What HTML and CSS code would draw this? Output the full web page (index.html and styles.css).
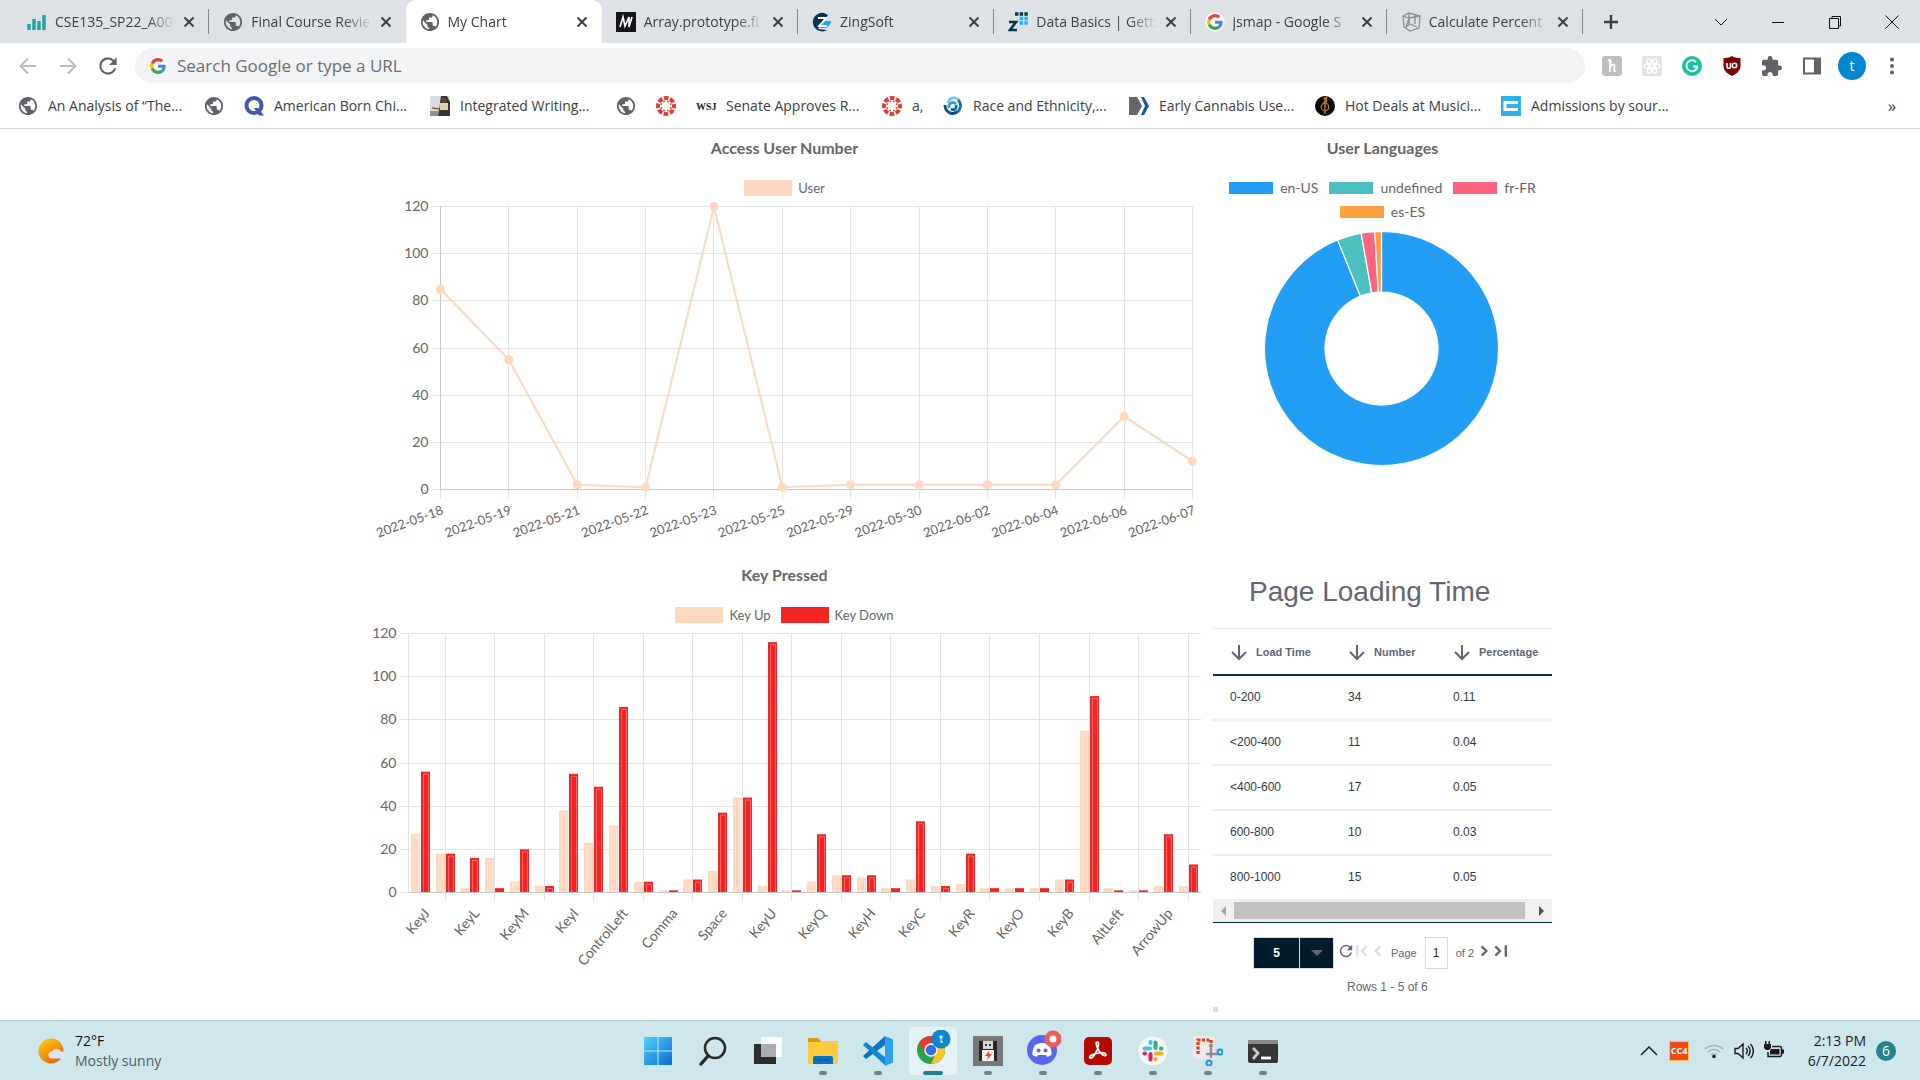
FILE: index.html
```html
<!DOCTYPE html>
<html lang="en">
<head>
<meta charset="utf-8">
<title>My Chart</title>
<link rel="stylesheet" href="styles.css">
</head>
<body>
<svg class="sprite" aria-hidden="true">
  <symbol id="globe" viewBox="1 1 22 22"><path fill="#5f6368" d="M12 2C6.480 2 2 6.480 2 12s4.480 10 10 10 10-4.480 10-10S17.520 2 12 2zm-1 17.930c-3.950-.490-7-3.850-7-7.930 0-.620.080-1.210.210-1.790L9 15v1c0 1.100.900 2 2 2v1.930zm6.900-2.540c-.260-.810-1-1.390-1.900-1.390h-1v-3c0-.550-.450-1-1-1H8v-2h2c.550 0 1-.450 1-1V7h2c1.100 0 2-.900 2-2v-.410c2.930 1.190 5 4.060 5 7.410 0 2.080-.800 3.970-2.100 5.390z"/></symbol>
  <symbol id="google" viewBox="0 0 60 60"><circle cx="30" cy="30" r="29" fill="#fff"/><g transform="translate(6 6)"><path fill="#ea4335" d="M24 9.500c3.540 0 6.710 1.220 9.210 3.600l6.850-6.850C35.900 2.380 30.470 0 24 0 14.620 0 6.510 5.380 2.560 13.220l7.980 6.190C12.430 13.720 17.740 9.500 24 9.500z"/><path fill="#4285f4" d="M46.980 24.550c0-1.570-.15-3.090-.38-4.550H24v9.020h12.940c-.58 2.960-2.260 5.480-4.780 7.180l7.730 6c4.510-4.180 7.090-10.360 7.090-17.650z"/><path fill="#fbbc05" d="M10.530 28.590c-.48-1.450-.76-2.990-.76-4.590s.27-3.140.76-4.590l-7.980-6.190C.92 16.460 0 20.120 0 24c0 3.880.92 7.540 2.560 10.780l7.970-6.190z"/><path fill="#34a853" d="M24 48c6.480 0 11.930-2.130 15.890-5.810l-7.730-6c-2.150 1.450-4.920 2.300-8.160 2.300-6.260 0-11.570-4.220-13.470-9.910l-7.980 6.190C6.510 42.620 14.620 48 24 48z"/></g></symbol>
  <symbol id="close" viewBox="0 0 12 12"><path d="M1.500 1.500l9 9M10.500 1.500l-9 9" stroke="#3c4043" stroke-width="2"/></symbol>
  <symbol id="canvas" viewBox="0 0 20 20"><circle cx="10" cy="10" r="8" fill="none" stroke="#e63c2f" stroke-width="4" stroke-dasharray="4.600 1.683" stroke-dashoffset="2.300"/><g fill="#e63c2f"><circle cx="14.600" cy="11.900" r=".9"/><circle cx="11.900" cy="14.600" r=".9"/><circle cx="8.100" cy="14.600" r=".9"/><circle cx="5.400" cy="11.900" r=".9"/><circle cx="5.400" cy="8.100" r=".9"/><circle cx="8.100" cy="5.400" r=".9"/><circle cx="11.900" cy="5.400" r=".9"/><circle cx="14.600" cy="8.100" r=".9"/></g></symbol>
  <symbol id="refresh" viewBox="0 0 24 24"><path d="M17.650 6.350A7.958 7.958 0 0 0 12 4a8 8 0 1 0 7.730 10h-2.080A6 6 0 1 1 12 6c1.660 0 3.140.690 4.220 1.780L13 11h7V4l-2.350 2.350z"/></symbol>
  <symbol id="sort" viewBox="0 0 18 18"><path d="M9 2v13.500M2 9l7 7 7-7" fill="none" stroke="#5f6675" stroke-width="2"/></symbol>
</svg>

<header class="browser">
  <div class="tabstrip">
    <div class="tabs">
      <div class="tab"><svg class="ico" viewBox="0 0 20 20"><path d="M3 12v6M8 7v11M13 9v9M18 3v15" transform="translate(-1)" stroke="#1fa3a8" stroke-width="3.400"/></svg><span class="tab-title">CSE135_SP22_A00</span><button class="close" aria-label="Close tab"><svg><use href="#close"/></svg></button></div>
      <div class="tab before-active"><svg class="ico"><use href="#globe"/></svg><span class="tab-title">Final Course Revie</span><button class="close" aria-label="Close tab"><svg><use href="#close"/></svg></button></div>
      <div class="tab active"><svg class="ico"><use href="#globe"/></svg><span class="tab-title">My Chart</span><button class="close" aria-label="Close tab"><svg><use href="#close"/></svg></button></div>
      <div class="tab"><svg class="ico" viewBox="0 0 20 20"><path fill="#15141a" d="M0 0h20v20H0z"/><path d="M4 15L7 5l2 9 4-9v10l3-10" fill="none" stroke="#fff" stroke-width="1.700"/></svg><span class="tab-title">Array.prototype.fi</span><button class="close" aria-label="Close tab"><svg><use href="#close"/></svg></button></div>
      <div class="tab"><svg class="ico" viewBox="0 0 20 20"><path fill="#04364f" d="M12 1A9.300 9.300 0 1 0 15 18l-9-1 4-5 6-9z"/><path fill="#14aef0" d="M13 9h6a9 9 0 0 1-5 7h-6z"/><path d="M6 6h8l-7 8h8" fill="none" stroke="#fff" stroke-width="1.800"/></svg><span class="tab-title">ZingSoft</span><button class="close" aria-label="Close tab"><svg><use href="#close"/></svg></button></div>
      <div class="tab"><svg class="ico" viewBox="0 0 20 20"><path d="M1 10h7l-6 8h7" fill="none" stroke="#04364f" stroke-width="2.600"/><path d="M7 2h13" stroke="#04364f" stroke-width="3.400" stroke-dasharray="3.400 1.300"/><path d="M11.700 6.500H20M11.700 11H20" stroke="#14b4f5" stroke-width="3.400" stroke-dasharray="3.400 1.300"/></svg><span class="tab-title">Data Basics | Getti</span><button class="close" aria-label="Close tab"><svg><use href="#close"/></svg></button></div>
      <div class="tab"><svg class="ico"><use href="#google"/></svg><span class="tab-title">jsmap - Google S</span><button class="close" aria-label="Close tab"><svg><use href="#close"/></svg></button></div>
      <div class="tab"><svg class="ico" viewBox="0 0 20 20"><path d="M2 4l6-3 11 3-1 12-9 3-6-4zM2 4l6 2 11-2M8 6L5 15l4-3 7 3M8 1v11M14 3v9" fill="none" stroke="#8b8d90" stroke-width="1.300"/></svg><span class="tab-title">Calculate Percent</span><button class="close" aria-label="Close tab"><svg><use href="#close"/></svg></button></div>
    </div>
    <button class="newtab" aria-label="New tab"><svg viewBox="0 0 16 16"><path d="M8 1v14M1 8h14" stroke="#3c4043" stroke-width="2.400"/></svg></button>
    <div class="winctl">
      <button aria-label="Search tabs"><svg viewBox="0 0 14 14"><path d="M1 4l6 6 6-6"/></svg></button>
      <button aria-label="Minimize"><svg viewBox="0 0 14 14"><path d="M1 7.500h12"/></svg></button>
      <button aria-label="Restore"><svg viewBox="0 0 14 14"><path d="M1.500 3.500h9v10h-9zM4 3.500v-2h8.500V11H10.500"/></svg></button>
      <button aria-label="Close"><svg viewBox="0 0 14 14"><path d="M.5.5l13 13M13.500.5l-13 13"/></svg></button>
    </div>
  </div>

  <div class="toolbar">
    <div class="nav">
      <button aria-label="Back"><svg viewBox="0 0 20 20"><path d="M18 10H3M10 2.500L2.500 10l7.500 7.500" fill="none" stroke="#babcbe" stroke-width="2"/></svg></button>
      <button aria-label="Forward"><svg viewBox="0 0 20 20"><path d="M2 10h15M10 2.500l7.500 7.500-7.500 7.500" fill="none" stroke="#babcbe" stroke-width="2"/></svg></button>
      <button aria-label="Reload"><svg class="reload" fill="#5f6368"><use href="#refresh"/></svg></button>
    </div>
    <label class="omnibox"><svg class="ico"><use href="#google"/></svg><input type="text" placeholder="Search Google or type a URL" aria-label="Address"></label>
    <div class="exts">
      <button aria-label="Honey"><svg viewBox="0 0 20 20"><rect width="20" height="20" rx="3" fill="#bfbfbf"/><path d="M8 3v13M8 12c2-5 5-4 4.500-1l-.5 3c0 2 1 1.500 2 1M6 4l4 2" fill="none" stroke="#fff" stroke-width="1.800"/></svg></button>
      <button aria-label="React tools"><svg viewBox="0 0 20 20"><rect width="20" height="20" rx="2" fill="#e3e3e3"/><g fill="none" stroke="#fff" stroke-width="1.200"><ellipse cx="10" cy="10" rx="8" ry="3"/><ellipse cx="10" cy="10" rx="8" ry="3" transform="rotate(60 10 10)"/><ellipse cx="10" cy="10" rx="8" ry="3" transform="rotate(120 10 10)"/><circle cx="10" cy="10" r="2"/></g></svg></button>
      <button aria-label="Grammarly"><svg viewBox="0 0 20 20"><circle cx="10" cy="10" r="10" fill="#15c39a"/><path d="M14 6a5.500 5.500 0 1 0 1 6l.3-1.500H11" fill="none" stroke="#fff" stroke-width="1.900"/></svg></button>
      <button aria-label="uBlock"><svg viewBox="0 0 20 20"><path fill="#7e0407" d="M10 0c3 2 6 2 8.500 2v8c0 5-4.500 8-8.500 10C6 18 1.500 15 1.500 10V2C4 2 7 2 10 0z"/><path d="M5 7v3.500a1.500 1.500 0 0 0 3.500 0V7" fill="none" stroke="#fff" stroke-width="1.600"/><circle cx="12.500" cy="9.500" r="2.200" fill="none" stroke="#fff" stroke-width="1.600"/></svg></button>
      <button aria-label="Extensions"><svg viewBox="2 1 21 21"><path fill="#5f6368" d="M20.500 11H19V7c0-1.100-.9-2-2-2h-4V3.500a2.500 2.500 0 0 0-5 0V5H4c-1.100 0-2 .9-2 2v3.800h1.500c1.490 0 2.700 1.210 2.700 2.700s-1.210 2.700-2.700 2.700H2V20c0 1.100.9 2 2 2h3.800v-1.500c0-1.490 1.210-2.700 2.700-2.700s2.700 1.210 2.700 2.700V22H17c1.100 0 2-.9 2-2v-4h1.500a2.500 2.500 0 0 0 0-5z"/></svg></button>
      <button aria-label="Side panel"><svg viewBox="0 0 20 20"><path d="M2 2.500h16v15H2z" fill="none" stroke="#5f6368" stroke-width="2"/><path d="M12 2h6v16h-6z" fill="#5f6368"/></svg></button>
      <button class="avatar" aria-label="Profile">t</button>
      <button aria-label="Menu"><svg viewBox="0 0 20 20" fill="#5f6368"><circle cx="10" cy="3.500" r="2"/><circle cx="10" cy="10" r="2"/><circle cx="10" cy="16.500" r="2"/></svg></button>
    </div>
  </div>

  <nav class="bookmarks">
    <a href="#"><svg class="ico"><use href="#globe"/></svg><span>An Analysis of “The...</span></a>
    <a href="#" aria-label="Bookmark"><svg class="ico"><use href="#globe"/></svg></a>
    <a href="#"><svg class="ico" viewBox="0 0 20 20"><circle cx="10" cy="9.500" r="7.500" fill="none" stroke="#4257b2" stroke-width="4"/><path d="M10 12h4l6 7.500h-5z" fill="#4257b2"/></svg><span>American Born Chi...</span></a>
    <a href="#"><svg class="ico" viewBox="0 0 20 20"><path fill="#d9dde2" d="M0 0h20v20H0z"/><path fill="#3a3438" d="M11 0h6l3 6v14H8z"/><path fill="#e2d3a3" d="M9 7h9v7h-8z"/><circle cx="14" cy="4" r="2.500" fill="#6b4230"/><path d="M10 13L2 12" stroke="#8d5c42" stroke-width="1.500"/><path fill="#8d8e90" d="M0 15h8v5H0z"/></svg><span>Integrated Writing...</span></a>
    <a href="#" aria-label="Bookmark"><svg class="ico"><use href="#globe"/></svg></a>
    <a href="#" aria-label="Canvas"><svg class="ico"><use href="#canvas"/></svg></a>
    <a href="#"><b class="ico wsj">WSJ</b><span>Senate Approves R...</span></a>
    <a href="#"><svg class="ico"><use href="#canvas"/></svg><span class="short">a,</span></a>
    <a href="#"><svg class="ico" viewBox="0 0 20 20"><g fill="none" stroke-width="2.800"><path d="M5 7c1-6 9-7 12-1" stroke="#7cc8ea"/><path d="M15 4c5 5 2 12-4 13" stroke="#1c6da4"/><path d="M14 16C8 20 2 15 2 9" stroke="#0d4f86"/><path d="M6 12c-1-5 4-7 7-4" stroke="#2f9fd0"/><path d="M8 13c4 2 6-1 5-4" stroke="#12619c"/></g></svg><span>Race and Ethnicity,...</span></a>
    <a href="#"><svg class="ico" viewBox="0 0 20 20"><path fill="#626569" d="M0 1h8l5 9-5 9H0z"/><path fill="#14589c" d="M12 1h3l5 9-5 9h-3l4-9z"/></svg><span>Early Cannabis Use...</span></a>
    <a href="#"><svg class="ico" viewBox="0 0 20 20"><circle cx="10" cy="10" r="10" fill="#0c0903"/><path d="M10 1v17M10 6v9M8.500 2.500l3-1v4l-3 1" fill="none" stroke="#b58220" stroke-width="1.300"/><circle cx="10" cy="11" r="3.800" fill="none" stroke="#b58220" stroke-width="1.200"/></svg><span>Hot Deals at Musici...</span></a>
    <a href="#"><svg class="ico" viewBox="0 0 20 20"><path fill="#2fb0e6" d="M0 0h20v20H0z"/><path d="M17 6.500H4v7h13" fill="none" stroke="#fff" stroke-width="3"/></svg><span>Admissions by sour...</span></a>
    <button class="more" aria-label="More bookmarks">»</button>
  </nav>
</header>

<main class="dashboard">
  <section class="chart">
    <h2>Access User Number</h2>
    <ul class="legend"><li><i class="swatch peach"></i>User</li></ul>
    <svg id="users" viewBox="0 0 833 358" role="img" aria-label="Users per day"></svg>
  </section>
  <section class="chart languages">
    <h2>User Languages</h2>
    <ul class="legend"><li><i class="swatch blue"></i>en-US</li><li><i class="swatch teal"></i>undefined</li><li><i class="swatch pink"></i>fr-FR</li><li><i class="swatch orange"></i>es-ES</li></ul>
    <svg id="languages" viewBox="0 0 339 300" role="img" aria-label="User languages"></svg>
  </section>
  <section class="chart">
    <h2>Key Pressed</h2>
    <ul class="legend"><li><i class="swatch peach"></i>Key Up</li><li><i class="swatch red"></i>Key Down</li></ul>
    <svg id="keys" viewBox="0 0 833 380" role="img" aria-label="Keys pressed"></svg>
  </section>
  <section class="loading">
    <h1>Page Loading Time</h1>
    <table>
      <thead><tr>
        <th><div><svg><use href="#sort"/></svg>Load Time</div></th>
        <th><div><svg><use href="#sort"/></svg>Number</div></th>
        <th><div><svg><use href="#sort"/></svg>Percentage</div></th>
      </tr></thead>
      <tbody>
        <tr><td>0-200</td><td>34</td><td>0.11</td></tr>
        <tr><td>&lt;200-400</td><td>11</td><td>0.04</td></tr>
        <tr><td>&lt;400-600</td><td>17</td><td>0.05</td></tr>
        <tr><td>600-800</td><td>10</td><td>0.03</td></tr>
        <tr><td>800-1000</td><td>15</td><td>0.05</td></tr>
      </tbody>
    </table>
    <div class="hscroll"><svg viewBox="0 0 5 10"><path d="M5 0v10L0 5z" fill="#a3a3a3"/></svg><div class="thumb"></div><svg viewBox="0 0 5 10"><path d="M0 0v10l5-5z" fill="#505050"/></svg></div>
    <div class="pager">
      <div class="pagesize"><select aria-label="Rows per page"><option>5</option></select><span><svg viewBox="0 0 12 6"><path d="M0 0h12L6 6z" fill="#5f6675"/></svg></span></div>
      <button aria-label="Reload"><svg class="wide" viewBox="3 3 18 18" fill="#5f6675"><use href="#refresh" width="24" height="24"/></svg></button>
      <button class="off" aria-label="First page"><svg viewBox="0 0 12 12"><path d="M2 1v10M10 2L6 6l4 4"/></svg></button>
      <button class="off" aria-label="Previous page"><svg viewBox="0 0 12 12"><path d="M8 2L4 6l4 4"/></svg></button>
      <label for="page">Page</label>
      <input id="page" type="text" value="1">
      <span class="total">of 2</span>
      <button aria-label="Next page"><svg viewBox="0 0 12 12"><path d="M4 2l4 4-4 4"/></svg></button>
      <button aria-label="Last page"><svg viewBox="0 0 12 12"><path d="M2 2l4 4-4 4M11 1v10"/></svg></button>
    </div>
    <p class="rows">Rows 1 - 5 of 6</p>
    <div class="grip"></div>
  </section>
</main>

<footer class="taskbar">
  <button class="weather">
    <svg viewBox="0 0 28 28"><defs><linearGradient id="sun" x1="0" y1="0" x2=".7" y2="1"><stop offset="0" stop-color="#fdd10c"/><stop offset="1" stop-color="#e8660c"/></linearGradient></defs><circle cx="13" cy="14" r="12.500" fill="url(#sun)"/><path d="M14 21.500a3.500 3.500 0 0 1 0-7 5 5 0 0 1 9 0 3.500 3.500 0 0 1 1 7z" fill="#d9e5f6"/></svg>
    <span><b>72°F</b><br>Mostly sunny</span>
  </button>
  <div class="apps">
    <button aria-label="Start"><svg viewBox="0 0 30 30"><defs><linearGradient id="win" x1="0" y1="0" x2="1" y2="1"><stop offset="0" stop-color="#4fd0fb"/><stop offset="1" stop-color="#0a6dd0"/></linearGradient></defs><path fill="url(#win)" d="M1 1h13.500v13.500H1zM15.500 1H29v13.500H15.500zM1 15.500h13.500V29H1zM15.500 15.500H29V29H15.500z"/></svg></button>
    <button aria-label="Search"><svg viewBox="0 0 30 30"><circle cx="17" cy="12" r="10" fill="none" stroke="#2b2b2b" stroke-width="2.600"/><path d="M10 20l-7 8" stroke="#2b2b2b" stroke-width="3.400" stroke-linecap="round"/></svg></button>
    <button aria-label="Task view"><svg viewBox="0 0 30 30"><path fill="#2c2c2c" d="M1 8h22v20H1z"/><path fill="#fff" opacity=".85" d="M23 1h6v20H8v-1h15z"/><path fill="#fff" d="M8 1h21v7H8z" opacity=".85"/><path fill="#a9adae" d="M8 8h15v13H8z"/></svg></button>
    <button class="run" aria-label="File Explorer"><svg viewBox="0 0 30 30"><path fill="#dd9a07" d="M0 2h10l3 3v6H0z"/><path fill="#fccb3e" d="M0 6h12l2-1h16v23H0z"/><path fill="#0c70cb" d="M5 28v-6a2 2 0 0 1 2-2h16a2 2 0 0 1 2 2v6z"/><path d="M9 24h12" stroke="#0b4c8c"/></svg></button>
    <button class="run" aria-label="VS Code"><svg viewBox="0 0 30 30"><path fill="#0b74bd" d="M22 0v9L3 23l-3-3z"/><path fill="#1088d4" d="M0 9l3-3 20 16v8z"/><path fill="#2ba3ef" d="M22 0l8 3.500v23L22 30z"/></svg></button>
    <button class="run current" aria-label="Chrome"><svg viewBox="0 0 36 36"><circle cx="16" cy="20" r="14" fill="#2ba24c"/><path fill="#fcc31e" d="M16 20V13h12.100A14 14 0 0 1 16 34l5-11z"/><path fill="#e33b2e" d="M3.900 13L10 23l6-10h12.100A14 14 0 0 0 3.900 13z"/><circle cx="16" cy="20" r="6.700" fill="#fff"/><circle cx="16" cy="20" r="5.300" fill="#2f6fe4"/><circle cx="26" cy="9" r="9.500" fill="#0e87cc"/><path d="M26 5v7h2M24 7h4" fill="none" stroke="#d6eef9" stroke-width="1.300"/></svg></button>
    <button class="run" aria-label="Flash tool"><svg viewBox="0 0 30 30"><path fill="#787878" d="M0 0h30v30H0z"/><path fill="#282525" d="M6 5h18v20H6z"/><path fill="#d8d8d8" d="M10 5h10v8H10z"/><path fill="#333" d="M12 8h2v2h-2zM16 8h2v2h-2z"/><path fill="#f5f5f5" d="M9 14h12v11H9z"/><path fill="#e8452b" d="M16 15l-4 5h3l-1 4 5-6h-3z"/></svg></button>
    <button class="run" aria-label="Discord"><svg viewBox="0 0 36 36"><circle cx="17" cy="20" r="15" fill="#5865f2"/><path fill="#fff" d="M10 15l5-2h4l5 2c2 3 3 7 2.500 10L22 27l-1-2h-8l-1 2-4.500-2C7 22 8 18 10 15z"/><circle cx="13.500" cy="20.500" r="2" fill="#5865f2"/><circle cx="20.500" cy="20.500" r="2" fill="#5865f2"/><circle cx="28" cy="9" r="6" fill="#fff" stroke="#f05b5b" stroke-width="5"/></svg></button>
    <button class="run" aria-label="Acrobat"><svg viewBox="0 0 30 30"><rect x="1" y="1" width="28" height="28" rx="5" fill="#b30b00"/><path d="M14 6c3 0 1 5 0 8-2 5-5 9-7 8-2-2 4-4 8-5 5-1 8 0 8 2-1 2-5-1-7-4-2-4-4-9-2-9z" fill="none" stroke="#fff" stroke-width="1.700"/></svg></button>
    <button class="run" aria-label="Slack"><svg viewBox="0 0 30 30"><circle cx="15" cy="15" r="14.500" fill="#f6f5f6"/><g stroke-width="4" stroke-linecap="round"><path d="M6.500 12.500H12M12.500 6v1" stroke="#36c5f0"/><path d="M17.500 6.500V12M23 12.500h.5" stroke="#2eb67d"/><path d="M23.500 17.500H18M17.500 23.500V23" stroke="#ecb22e"/><path d="M12.500 23.500V18M7 17.500h-.5" stroke="#e01e5a"/></g></svg></button>
    <button class="run" aria-label="Snipping Tool"><svg viewBox="0 0 30 30"><rect width="22" height="23" rx="2" fill="#eee8e6"/><path d="M5 18V4h13v7" fill="none" stroke="#d4421b" stroke-width="3.200" stroke-dasharray="3 1.500"/><path d="M18 8v14M13 18h12" stroke="#8b8f94" stroke-width="2.400"/><circle cx="27" cy="16" r="2.500" fill="none" stroke="#1c93dc" stroke-width="2"/><circle cx="16" cy="27" r="2.500" fill="none" stroke="#1c93dc" stroke-width="2"/></svg></button>
    <button class="run" aria-label="Terminal"><svg viewBox="0 0 30 30"><rect y="4" width="30" height="23" rx="2" fill="#363636"/><path d="M0 8V6a2 2 0 0 1 2-2h26a2 2 0 0 1 2 2v2z" fill="#8a8a8a"/><path d="M5 12l5 5-5 6" fill="none" stroke="#c9c9c9" stroke-width="2.800"/><path d="M13 22h10" stroke="#fff" stroke-width="2.800"/></svg></button>
  </div>
  <div class="tray">
    <button aria-label="Hidden icons"><svg viewBox="0 0 20 20"><path d="M2 14l8-8 8 8" fill="none" stroke="#1b1b1b" stroke-width="1.500"/></svg></button>
    <button class="cc" aria-label="Converter">CC4</button>
    <button aria-label="Network"><svg viewBox="0 0 20 20"><g fill="none" stroke="#a3b6bc" stroke-width="1.500"><path d="M1 8a13 13 0 0 1 18 0M4 11a8.500 8.500 0 0 1 12 0M7 14a4.500 4.500 0 0 1 6 0"/></g><circle cx="10" cy="15.500" r="1.800" fill="#1b1b1b"/></svg></button>
    <button aria-label="Volume"><svg viewBox="0 0 20 20" fill="none" stroke="#1b1b1b" stroke-width="1.400"><path d="M1 7.500h3L9 3v14l-5-4.500H1zM12 7a4 4 0 0 1 0 6M14 5a7 7 0 0 1 0 10M16.500 3a10 10 0 0 1 0 14"/></svg></button>
    <button aria-label="Battery"><svg viewBox="0 0 20 20"><path d="M8 5.500h8a1.500 1.500 0 0 1 1.500 1.500v7a1.500 1.500 0 0 1-1.500 1.500H4V11" fill="none" stroke="#1b1b1b" stroke-width="1.500"/><path d="M7 8h8.500v5.500H6V10zM17.500 8.500H20v4h-2.500zM0 3h7v4L5 9H2L0 7zM1 0h1.500v3H1zM4.500 0H6v3H4.500z" fill="#1b1b1b"/></svg></button>
    <button class="clock">2:13 PM<br>6/7/2022</button>
    <span class="count">6</span>
  </div>
</footer>
<script src="charts.js"></script>
</body>
</html>
```
FILE: styles.css
```css
* { box-sizing: border-box; }
body {
  margin: 0;
  min-height: 100vh;
  display: flex;
  flex-direction: column;
  background: #fff;
  font-family: "Open Sans", "Noto Sans", sans-serif;
  font-size: 14px;
  color: #3c4043;
}
button { border: 0; padding: 0; background: none; font: inherit; color: inherit; }
button svg { display: block; }
.sprite { position: absolute; width: 0; height: 0; }
.ico { flex: none; width: 20px; height: 20px; }

/* tab strip */
.tabstrip { display: flex; align-items: center; height: 43px; background: #dee1e6; padding-left: 13px; }
.tabs { display: flex; flex: 0 1 1570px; align-self: stretch; min-width: 0; }
.tab {
  display: flex;
  align-items: center;
  flex: 1 1 0;
  min-width: 0;
  padding: 0 14px;
  background: linear-gradient(#85898e, #85898e) right center / 1px 25px no-repeat;
}
.tab-title {
  flex: 1;
  min-width: 0;
  margin-left: 8px;
  line-height: 20px;
  white-space: nowrap;
  overflow: hidden;
  mask-image: linear-gradient(to right, #000 calc(100% - 28px), transparent);
}
.close { flex: none; margin-left: 8px; }
.close svg { width: 12px; height: 12px; }
.tab.before-active { background: none; }
.tab.active { background: #fff; border-radius: 10px 10px 0 0; }
.newtab { margin-left: 20px; }
.newtab svg { width: 16px; height: 16px; }
.winctl { display: flex; margin-left: auto; }
.winctl button { width: 57px; height: 36px; display: grid; place-items: center; }
.winctl svg { width: 14px; height: 14px; fill: none; stroke: #111; stroke-width: 1; }

/* toolbar */
.toolbar { display: flex; align-items: center; height: 45px; padding: 0 8px; }
.nav { display: flex; width: 127px; }
.nav button { width: 40px; height: 28px; display: grid; place-items: center; }
.nav svg { width: 20px; height: 20px; }
.nav .reload { width: 26px; height: 26px; }
.omnibox { flex: 1; display: flex; align-items: center; height: 35px; padding-left: 13px; background: #f1f3f4; border-radius: 18px; }
.omnibox input { flex: 1; margin-left: 9px; padding: 0; border: 0; outline: 0; background: none; font: 17px "Open Sans", sans-serif; }
.omnibox input::placeholder { color: #6b6f73; opacity: 1; }
.exts { display: flex; align-items: center; padding-left: 7px; }
.exts button { width: 40px; display: grid; place-items: center; }
.exts svg { width: 20px; height: 20px; }
.exts .avatar { width: 28px; height: 28px; margin: 0 6px; border-radius: 50%; background: #0288d1; color: #fff; }

/* bookmarks */
.bookmarks { display: flex; align-items: center; gap: 20px; height: 41px; padding: 0 18px 4px; border-bottom: 1px solid #dadce0; }
.bookmarks a { display: flex; align-items: center; gap: 10px; color: inherit; text-decoration: none; }
.bookmarks span { width: 136px; line-height: 20px; white-space: nowrap; }
.bookmarks .short { width: 11px; }
.wsj { display: grid; place-items: center; font: bold 10px "Liberation Serif", serif; color: #222; }
.more { margin-left: auto; width: 20px; font-size: 17px; line-height: 20px; }

/* dashboard */
.dashboard {
  flex: 1;
  display: grid;
  grid-template-columns: minmax(0, 833fr) minmax(0, 339fr);
  grid-template-rows: auto 1fr;
  column-gap: 12px;
  width: 100%;
  max-width: 1184px;
  margin: 0 auto;
}
.chart { padding-top: 9px; font: 13px Lato, sans-serif; color: #666; }
.chart h2 { margin: 0; font-size: 16px; line-height: 20px; text-align: center; }
.chart svg { display: block; width: 100%; height: auto; }
.chart text { font: 14px Lato, sans-serif; fill: #666; }
.chart .date { font-size: 13px; }
.legend { display: flex; flex-wrap: wrap; justify-content: center; gap: 4px 10px; margin: 20px 0 0; padding: 0; list-style: none; line-height: 20px; }
.legend li { display: flex; align-items: center; gap: 6px; }
.swatch { width: 48px; height: 16px; }
.languages .legend { column-gap: 11px; font-size: 14px; }
.languages .legend li { gap: 7px; }
.languages .swatch { width: 44px; height: 12px; }
.peach { background: #ffd8c0; }
.red { background: #f42424; }
.blue { background: #229ff5; }
.teal { background: #4bc0c0; }
.pink { background: #ff6384; }
.orange { background: #ff9f40; }
.grid { stroke: #e4e4e4; fill: none; }
.axis { stroke: #c9c9c9; fill: none; }
.series { stroke: #ffd8c0; stroke-width: 2; fill: none; }
.up { fill: #ffd8c0; }
.down { fill: #f42424; }
.inset { fill: none; stroke: #fff; stroke-opacity: .3; }

/* loading table */
.loading { font-family: "Liberation Sans", Arial, sans-serif; font-size: 12px; color: #5f6675; }
.loading h1 { margin: 0; padding: 20px 0 20px 36px; font-size: 28px; font-weight: 400; line-height: 32px; white-space: nowrap; }
.loading table { width: 100%; table-layout: fixed; border-collapse: separate; border-spacing: 0; border-top: 1px solid #ececec; }
.loading th:first-child { width: 118px; }
.loading th:nth-child(2) { width: 105px; }
.loading th { height: 47px; padding: 0 0 0 17px; border-bottom: 2px solid #04304f; font-size: 11px; white-space: nowrap; }
.loading th div { display: flex; align-items: center; gap: 8px; }
.loading th svg { width: 18px; height: 18px; }
.loading td { height: 45px; padding: 0 0 2px 17px; border-bottom: 2px solid #eee; color: #333a45; }
.loading tbody tr:last-child td { height: 43px; border: 0; }
.hscroll { display: flex; align-items: center; height: 24px; padding: 0 8px; background: #f0f0f0; border-bottom: 1px solid #04304f; }
.hscroll svg { width: 5px; height: 10px; }
.thumb { flex: 1; height: 17px; margin: 0 14px 0 8px; background: #c1c1c1; }
.pager { display: flex; align-items: center; margin: 14px 0 0 40px; font-size: 11px; }
.pagesize { display: flex; width: 81px; height: 32px; margin-right: 4px; border: 1px solid #d9dee2; background: #001b2b; }
.pagesize select { width: 46px; border: 0; border-right: 1px solid #d9dee2; appearance: none; background: none; color: #fff; font: bold 12px "Liberation Sans", Arial, sans-serif; text-align: center; text-align-last: center; }
.pagesize span { flex: 1; display: grid; place-items: center; }
.pagesize svg { width: 12px; height: 6px; }
.pager button { padding: 0 1px; }
.pager button svg { width: 14px; height: 14px; margin-bottom: 4px; fill: none; stroke: #5f6675; stroke-width: 2; }
.pager button .wide { fill: #5f6675; stroke: none; }
.pager .off svg { stroke: #dcdfe3; }
.pager label { margin-left: 5px; }
.pager input { width: 23px; height: 32px; margin: 0 8px; padding: 0; border: 1px solid #d9d9d9; font: 12px "Liberation Sans", Arial, sans-serif; text-align: center; color: #222; }
.total { margin-right: 2px; }
.rows { margin: 11px 0 13px 134px; line-height: 14px; }
.grip { width: 5px; height: 5px; background: #ddd; }

/* taskbar */
.taskbar { display: grid; grid-template-columns: 1fr auto 1fr; align-items: center; height: 60px; padding: 0 24px; background: #cee7ec; border-top: 1px solid #bad0d8; color: #1b1b1b; }
.weather { display: flex; align-items: center; gap: 9px; padding-left: 14px; text-align: left; line-height: 20px; color: #4f5e62; }
.weather svg { width: 28px; height: 28px; }
.weather b { font-weight: 400; color: #111; }
.apps { display: flex; gap: 7px; }
.apps button { position: relative; width: 48px; height: 48px; display: grid; place-items: center; border-radius: 5px; }
.apps svg { width: 30px; height: 30px; }
.apps svg[viewBox="0 0 36 36"] { width: 36px; height: 36px; margin-bottom: 6px; }
.apps .run::after { content: ""; position: absolute; left: 20px; bottom: 0; width: 8px; height: 4px; border-radius: 2px; background: #6e8288; }
.apps .current { background: #e4f2f6; }
.apps .current::after { left: 14px; width: 20px; background: #25808f; }
.tray { display: flex; align-items: center; justify-content: flex-end; gap: 10px; }
.tray svg { width: 20px; height: 20px; }
.tray .cc { width: 20px; height: 20px; margin-right: 5px; background: #ee4b1a; border: 1px solid #f7c34a; color: #fff; font-size: 9px; font-weight: 700; line-height: 16px; }
.tray .clock { width: 72px; text-align: right; line-height: 20px; }
.count { width: 20px; height: 20px; border-radius: 50%; background: #25808f; color: #fff; font-size: 14px; line-height: 20px; text-align: center; }
```
FILE: charts.js
```js
const NS = "http://www.w3.org/2000/svg";

function add(svg, name, attrs, text) {
  const el = document.createElementNS(NS, name);
  for (const key in attrs) el.setAttribute(key, attrs[key]);
  if (text !== undefined) el.textContent = text;
  svg.appendChild(el);
}

function yAxis(svg, left, right, top, bottom) {
  for (let v = 0; v <= 120; v += 20) {
    const y = Math.round(bottom - (bottom - top) * v / 120 - 0.5) + 0.5;
    add(svg, "path", { class: "grid", d: `M${left - 9} ${y}H${right}` });
    add(svg, "text", { x: left - 12, y: y + 4.5, "text-anchor": "end" }, v);
  }
}

function tiltedLabel(svg, x, y, angle, text, cls) {
  add(svg, "text", { class: cls, x, y, dy: "0.35em", "text-anchor": "end", transform: `rotate(${-angle} ${x} ${y})` }, text);
}

function drawUsers() {
  const svg = document.getElementById("users");
  const days = ["05-18", "05-19", "05-21", "05-22", "05-23", "05-25", "05-29", "05-30", "06-02", "06-04", "06-06", "06-07"];
  const counts = [85, 55, 2, 1, 120, 1, 2, 2, 2, 2, 31, 12];
  const left = 72.5, right = 824.5, top = 8.5, bottom = 291.5;
  const px = i => left + i * (right - left) / 11;
  const py = v => bottom - v * (bottom - top) / 120;
  yAxis(svg, left, right, top, bottom);
  days.forEach((day, i) => {
    const x = Math.round(px(i) - 0.5) + 0.5;
    add(svg, "path", { class: "grid", d: `M${x} ${top}V${bottom + 9}` });
    tiltedLabel(svg, px(i) + 2, bottom + 20, 20, "2022-" + day, "date");
  });
  add(svg, "path", { class: "axis", d: `M${left} ${top}V${bottom}H${right}` });
  add(svg, "polyline", { class: "series", points: counts.map((v, i) => px(i) + "," + py(v)).join(" ") });
  counts.forEach((v, i) => add(svg, "circle", { class: "up", cx: px(i), cy: py(v), r: 4.5 }));
}

function drawLanguages() {
  const svg = document.getElementById("languages");
  const cx = 168.5, cy = 126.5, outer = 117, inner = 56.5;
  const slices = [[0, 338, "#229ff5"], [338, 350, "#4bc0c0"], [350, 356.7, "#ff6384"], [356.7, 360, "#ff9f40"]];
  const at = (r, deg) => {
    const a = deg * Math.PI / 180;
    return `${cx + r * Math.sin(a)} ${cy - r * Math.cos(a)}`;
  };
  slices.forEach(([from, to, fill]) => {
    const big = to - from > 180 ? 1 : 0;
    add(svg, "path", {
      fill, stroke: "#fff", "stroke-width": 1.2,
      d: `M${at(outer, from)}A${outer} ${outer} 0 ${big} 1 ${at(outer, to)}L${at(inner, to)}A${inner} ${inner} 0 ${big} 0 ${at(inner, from)}Z`
    });
  });
}

function drawKeys() {
  const svg = document.getElementById("keys");
  const labels = ["KeyJ", "KeyL", "KeyM", "KeyI", "ControlLeft", "Comma", "Space", "KeyU", "KeyQ", "KeyH", "KeyC", "KeyR", "KeyO", "KeyB", "AltLeft", "ArrowUp"];
  const up = [27, 18, 2, 16, 5, 3, 38, 23, 31, 5, 1, 6, 10, 44, 3, 1, 5, 8, 7, 2, 6, 3, 4, 2, 2, 2, 6, 75, 2, 1, 3, 3];
  const down = [56, 18, 16, 2, 20, 3, 55, 49, 86, 5, 1, 6, 37, 44, 116, 1, 27, 8, 8, 2, 33, 3, 18, 2, 2, 2, 6, 91, 1, 1, 27, 13];
  const left = 40.5, right = 833, top = 8.5, bottom = 267.5;
  const step = (right - left) / 32;
  yAxis(svg, left, right, top, bottom);
  add(svg, "path", { class: "grid", d: `M${left} ${top}V${bottom}` });
  labels.forEach((label, i) => {
    const x = Math.floor(left + (2 * i + 1.5) * step - 0.5) + 0.5;
    add(svg, "path", { class: "grid", d: `M${x} ${top}V${bottom + 9}` });
    tiltedLabel(svg, left + (2 * i + 0.5) * step + 6, bottom + 18, 50, label, "key");
  });
  const bar = (cls, x, v) => {
    const h = v * (bottom - top) / 120;
    const y = bottom - h;
    add(svg, "rect", { class: cls, x, y, width: 9, height: h });
    if (h > 5) add(svg, "path", { class: "inset", d: `M${x + 2.5} ${bottom}V${y + 2.5}H${x + 7.5}V${bottom}` });
  };
  up.forEach((v, i) => {
    const x = Math.round(left + (i + 0.5) * step - 10);
    bar("up", x, v);
    bar("down", x + 10, down[i]);
  });
  add(svg, "path", { class: "axis", d: `M${left} ${bottom}H${right}` });
}

drawUsers();
drawLanguages();
drawKeys();
```
